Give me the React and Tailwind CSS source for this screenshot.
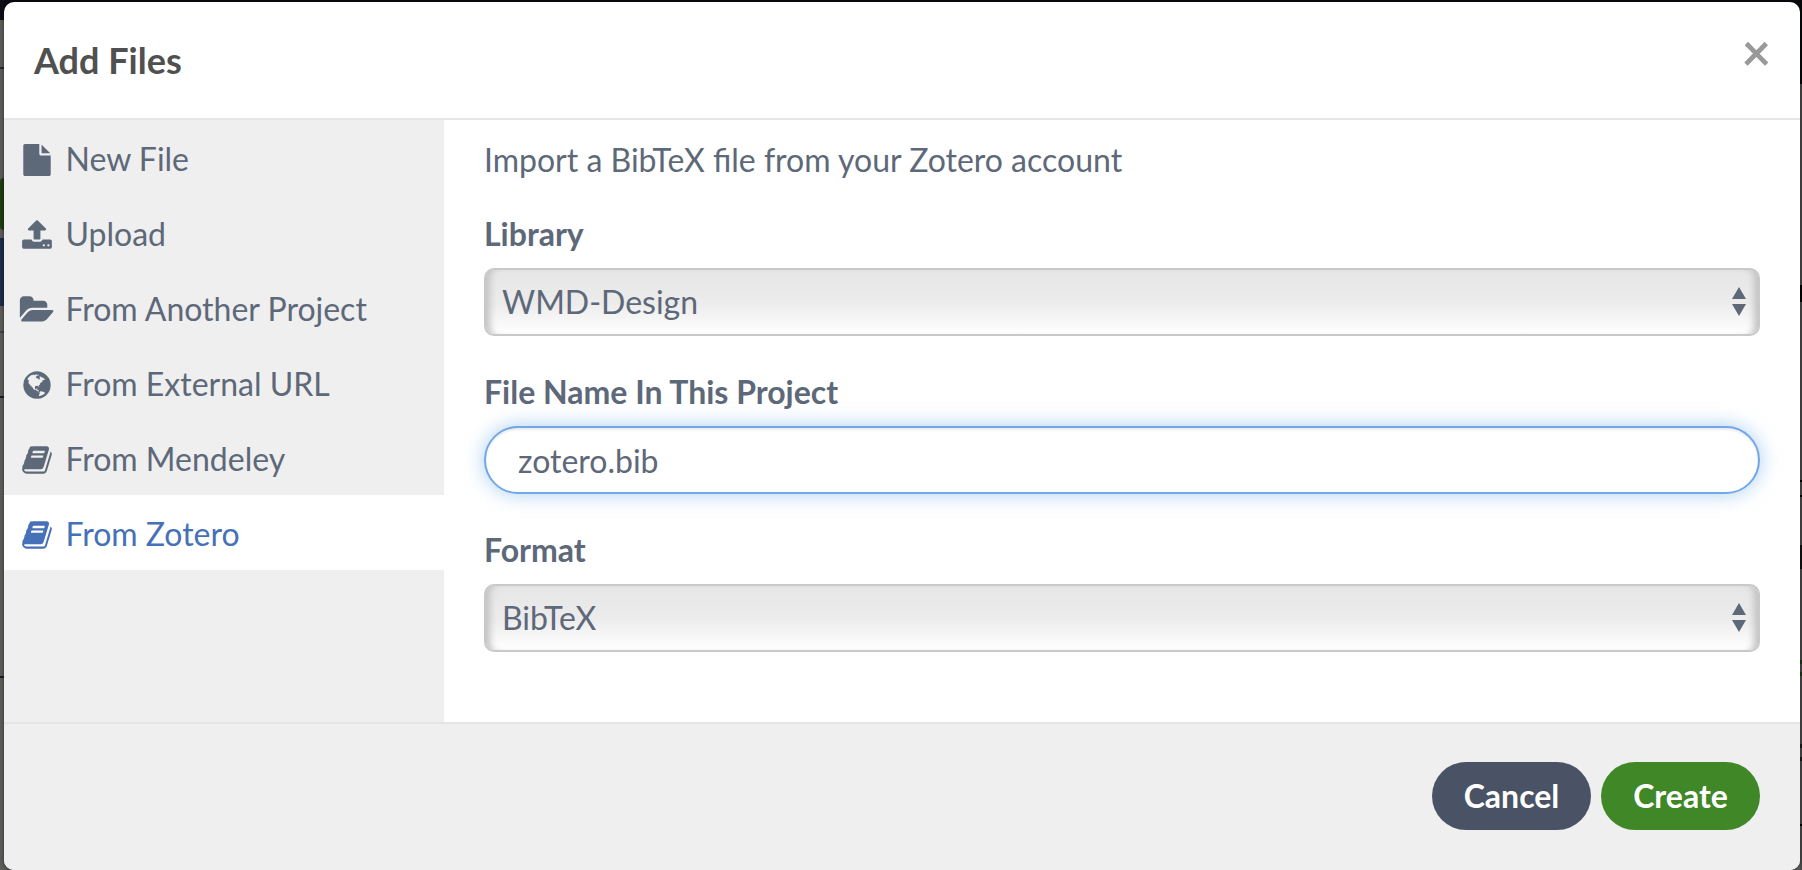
const paths = {
  file: "M1152 512v-472q22 14 36 28l408 408q14 14 28 36h-472zm-128 32q0 40 28 68t68 28h544v1056q0 40-28 68t-68 28h-1344q-40 0-68-28t-28-68v-1600q0-40 28-68t68-28h800v544z",
  upload: "M1344 1472q0-26-19-45t-45-19-45 19-19 45 19 45 45 19 45-19 19-45zm256 0q0-26-19-45t-45-19-45 19-19 45 19 45 45 19 45-19 19-45zm128-224v320q0 40-28 68t-68 28h-1472q-40 0-68-28t-28-68v-320q0-40 28-68t68-28h427q21 56 70.5 92t110.5 36h256q61 0 110.5-36t70.5-92h427q40 0 68 28t28 68zm-325-648q-17 40-59 40h-256v448q0 26-19 45t-45 19h-256q-26 0-45-19t-19-45v-448h-256q-42 0-59-40-17-39 14-69l448-448q18-19 45-19t45 19l448 448q31 30 14 69z",
  folder: "M1815 952q0 31-31 66l-336 396q-43 51-120.5 86.5t-143.5 35.5h-1088q-34 0-60.5-13t-26.5-43q0-31 31-66l336-396q43-51 120.5-86.5t143.5-35.5h1088q34 0 60.5 13t26.5 43zm-343-344v160h-832q-94 0-197 47.5t-164 119.5l-337 396-5 6q0-4-.5-12.5t-.5-12.5v-960q0-92 66-158t158-66h320q92 0 158 66t66 158v32h544q92 0 158 66t66 158z",
  globe: "M896 128q209 0 385.5 103t279.5 279.5 103 385.5-103 385.5-279.5 279.5-385.5 103-385.5-103-279.5-279.5-103-385.5 103-385.5 279.5-279.5 385.5-103zm274 521q-2 1-9.5 9.5t-13.5 9.5q2 0 4.5-5t5-11 3.5-7q6-7 22-15 14-6 52-12 34-8 51 11-2-2 9.5-13t14.5-12q3-2 15-4.5t15-7.5l2-22q-12 1-17.5-7t-6.5-21q0 2-6 8 0-7-4.5-8t-11.5 1-9 1q-10-3-15-7.5t-8-16.5-4-15q-2-5-9.5-11t-9.5-10q-1-2-2.5-5.5t-3-6.5-4-5.5-5.5-2.5-7 5-7.5 10-4.5 5q-3-2-6-1.5t-4.5 1-4.5 3-5 3.5q-3 2-8.5 3t-8.5 2q15-5-1-11-10-4-16-3 9-4 7.5-12t-8.5-14h5q-1-4-8.5-8.5t-17.5-8.5-13-6q-8-5-34-9.5t-33-.5q-5 6-4.5 10.5t4 14 3.5 12.5q1 6-5.5 13t-6.5 12q0 7 14 15.5t10 21.5q-3 8-16 16t-16 12q-5 8-1.5 18.5t10.5 16.5q2 2 1.5 4t-3.5 4.5-5.5 4-6.5 3.5l-3 2q-11 5-20.5-6t-13.5-26q-7-25-16-30-23-8-29 1-5-13-41-26-25-9-58-4 6-1 0-15-7-15-19-12 3-6 4-17.5t1-13.5q3-13 12-23 1-1 7-8.5t9.5-13.5.5-6q35 4 50-11 5-5 11.5-17t10.5-17q9-6 14-5.5t14.5 5.5 14.5 5q14 1 15.5-11t-7.5-20q12 1 3-17-4-7-8-9-12-4-27 5-8 4 2 8-1-1-9.5 10.5t-16.5 17.5-16-5q-1-1-5.5-13.5t-9.5-13.5q-8 0-16 15 3-8-11-15t-24-8q19-12-8-27-7-4-20.5-5t-19.5 4q-5 7-5.5 11.5t5 8 10.5 5.5 11.5 4 8.5 3q14 10 8 14-2 1-8.5 3.5t-11.5 4.5-6 4q-3 4 0 14t-2 14q-5-5-9-17.5t-7-16.5q7 9-25 6l-10-1q-4 0-16 2t-20.5 1-13.5-8q-4-8 0-20 1-4 4-2-4-3-11-9.5t-10-8.5q-46 15-94 41 6 1 12-1 5-2 13-6.5t10-5.5q34-14 42-7l5-5q14 16 20 25-7-4-30-1-20 6-22 12 7 12 5 18-4-3-11.5-10t-14.5-11-15-5q-16 0-22 1-146 80-235 222 7 7 12 8 4 1 5 9t2.5 11 11.5-3q9 8 3 19 1-1 44 27 19 17 21 21 3 11-10 18-1-2-9-9t-9-4q-3 5 .5 18.5t10.5 12.5q-7 0-9.5 16t-2.5 35.5-1 23.5l2 1q-3 12 5.5 34.5t21.5 19.5q-13 3 20 43 6 8 8 9 3 2 12 7.5t15 10 10 10.5q4 5 10 22.5t14 23.5q-2 6 9.5 20t10.5 23q-1 0-2.5 1t-2.5 1q3 7 15.5 14t15.5 13q1 3 2 10t3 11 8 2q2-20-24-62-15-25-17-29-3-5-5.5-15.5t-4.5-14.5q2 0 6 1.5t8.5 3.5 7.5 4 2 3q-3 7 2 17.5t12 18.5 17 19 12 13q6 6 14 19.5t0 13.5q9 0 20 10.5t17 19.5q5 8 8 26t5 24q2 7 8.5 13.5t12.5 9.5l16 8 13 7q5 2 18.5 10.5t21.5 11.5q10 4 16 4t14.5-2.5 13.5-3.5q15-2 29 15t21 21q36 19 55 11-2 1 .5 7.5t8 15.5 9 14.5 5.5 8.5q5 6 18 15t18 15q6-4 7-9-3 8 7 20t18 10q14-3 14-32-31 15-49-18 0-1-2.5-5.5t-4-8.5-2.5-8.5 0-7.5 5-3q9 0 10-3.5t-2-12.5-4-13q-1-8-11-20t-12-15q-5 9-16 8t-16-9q0 1-1.5 5.5t-1.5 6.5q-13 0-15-1 1-3 2.5-17.5t3.5-22.5q1-4 5.5-12t7.5-14.5 4-12.5-4.5-9.5-17.5-2.5q-19 1-26 20-1 3-3 10.5t-5 11.5-9 7q-7 3-24 2t-24-5q-13-8-22.5-29t-9.5-37q0-10 2.5-26.5t3-25-5.5-24.5q3-2 9-9.5t10-10.5q2-1 4.5-1.5t4.5 0 4-1.5 3-6q-1-1-4-3-3-3-4-3 7 3 28.5-1.5t27.5 1.5q15 11 22-2 0-1-2.5-9.5t-.5-13.5q5 27 29 9 3 3 15.5 5t17.5 5q3 2 7 5.5t5.5 4.5 5-.5 8.5-6.5q10 14 12 24 11 40 19 44 7 3 11 2t4.5-9.5 0-14-1.5-12.5l-1-8v-18l-1-8q-15-3-18.5-12t1.5-18.5 15-18.5q1-1 8-3.5t15.5-6.5 12.5-8q21-19 15-35 7 0 11-9-1 0-5-3t-7.5-5-4.5-2q9-5 2-16 5-3 7.5-11t7.5-10q9 12 21 2 7-8 1-16 5-7 20.5-10.5t18.5-9.5q7 2 8-2t1-12 3-12q4-5 15-9t13-5l17-11q3-4 0-4 18 2 31-11 10-11-6-20 3-6-3-9.5t-15-5.5q3-1 11.5-.5t10.5-1.5q15-10-7-16-17-5-43 12zm-163 877q206-36 351-189-3-3-12.5-4.5t-12.5-3.5q-18-7-24-8 1-7-2.5-13t-8-9-12.5-8-11-7q-2-2-7-6t-7-5.5-7.5-4.5-8.5-2-10 1l-3 1q-3 1-5.5 2.5t-5.5 3-4 3 0 2.5q-21-17-36-22-5-1-11-5.5t-10.5-7-10-1.5-11.5 7q-5 5-6 15t-2 13q-7-5 0-17.5t2-18.5q-3-6-10.5-4.5t-12 4.5-11.5 8.5-9 6.5-8.5 5.5-8.5 7.5q-3 4-6 12t-5 11q-2-4-11.5-6.5t-9.5-5.5q2 10 4 35t5 38q7 31-12 48-27 25-29 40-4 22 12 26 0 7-8 20.5t-7 21.5q0 6 2 16z",
  book: "M1703 478q40 57 18 129l-275 906q-19 64-76.5 107.5t-122.5 43.5h-923q-77 0-148.5-53.5t-99.5-131.5q-24-67-2-127 0-4 3-27t4-37q1-8-3-21.5t-3-19.5q2-11 8-21t16.5-23.5 16.5-23.5q23-38 45-91.5t30-91.5q3-10 .5-30t-.5-28q3-11 17-28t17-23q21-36 42-92t25-90q1-9-2.5-32t.5-28q4-13 22-30.5t22-22.5q19-26 42.5-84.5t27.5-96.5q1-8-3-25.5t-2-26.5q2-8 9-18t18-23 17-21q8-12 16.5-30.5t15-35 16-36 19.5-32 26.5-23.5 36-11.5 47.5 5.5l-1 3q38-9 51-9h761q74 0 114 56t18 130l-274 906q-36 119-71.5 153.5t-128.5 34.5h-869q-27 0-38 15-11 16-1 43 24 70 144 70h923q29 0 56-15.5t35-41.5l300-987q7-22 5-57 38 15 59 43zm-1064 2q-4 13 2 22.5t20 9.5h608q13 0 25.5-9.5t16.5-22.5l21-64q4-13-2-22.5t-20-9.5h-608q-13 0-25.5 9.5t-16.5 22.5zm-83 256q-4 13 2 22.5t20 9.5h608q13 0 25.5-9.5t16.5-22.5l21-64q4-13-2-22.5t-20-9.5h-608q-13 0-25.5 9.5t-16.5 22.5z",
};

const sources = [
  { icon: "file", label: "New File" },
  { icon: "upload", label: "Upload" },
  { icon: "folder", label: "From Another Project" },
  { icon: "globe", label: "From External URL" },
  { icon: "book", label: "From Mendeley" },
  { icon: "book", label: "From Zotero", active: true },
];

function SourceItem({ icon, label, active }) {
  return (
    <li>
      <button
        className={`flex h-[75px] w-full items-center gap-[8.5px] pl-3 pb-px text-left ${
          active ? "bg-white text-[#4670b8]" : "text-[#5d6879]"
        }`}
      >
        <span className="flex w-[41px] justify-center pt-[5px]">
          <svg viewBox="0 0 1792 1792" className="size-8 overflow-visible" fill="currentColor">
            <path d={paths[icon]} />
          </svg>
        </span>
        <span className="pt-[4px]">{label}</span>
      </button>
    </li>
  );
}

function SelectField({ label, value }) {
  return (
    <div className="flex flex-col">
      <label className="h-[50px] font-bold leading-[50px]">{label}</label>
      <div
        role="combobox"
        className="mt-[9px] flex h-[68px] items-center justify-between rounded-[10px] border-2 border-[#c9c9c9] bg-[linear-gradient(#e6e6e6,#ececec_52%,#ffffff)] pr-3 pl-4 shadow-[inset_9px_0_7px_-5px_#c2c2c2,inset_-9px_0_7px_-5px_#c2c2c2]"
      >
        <span className="pb-px">{value}</span>
        <svg viewBox="0 0 14 29" className="mb-px h-[29px] w-[14px] fill-[#5d6879]">
          <path d="M7 0 14 12H0zM7 29 0 17h14z" />
        </svg>
      </div>
    </div>
  );
}

export default function App() {
  return (
    <div className="flex h-[870px] w-[1802px] overflow-hidden bg-[linear-gradient(#0b0b10_50%,#5a5a58_50%)] font-['Lato',sans-serif] text-[32px] leading-[50px] text-[#5d6879]">
      <div className="flex w-1 shrink-0 flex-col bg-[#5e5d5a]">
        <div className="h-5 bg-[#0e0f16]" />
        <div className="mt-[47px] h-[2px] bg-[#2a2a2a]" />
        <div className="mt-[109px] h-[52px] rounded-l-full bg-[#1f3d0e]" />
        <div className="mt-2 h-[68px] bg-[#1f2d4b]" />
        <div className="mt-[25px] h-[2px] bg-[#454443]" />
        <div className="mt-[63px] h-[2px] bg-[#1c1c1c]" />
        <div className="mt-[278px] h-[2px] bg-[#1c1c1c]" />
      </div>
      <section className="z-10 mt-[2px] flex w-[1796px] flex-col overflow-hidden rounded-[10px] bg-white shadow-[0_0_4px_rgba(0,0,0,0.5)]">
        <header className="flex h-[118px] shrink-0 items-start justify-between border-b-2 border-[#e5e5e5] pr-[29px] pl-[30px]">
          <h1 className="pt-[33px] text-[36px] font-bold leading-[50px] text-[#505050]">Add Files</h1>
          <button aria-label="Close" className="pt-[25px] text-[51px] font-bold leading-[50px] text-[#999999]">
            ×
          </button>
        </header>
        <div className="flex h-[602px] shrink-0">
          <ul className="w-[440px] shrink-0 bg-[#efefef]">
            {sources.map((s) => (
              <SourceItem key={s.label} {...s} />
            ))}
          </ul>
          <main className="flex flex-1 flex-col px-10 pt-[15px]">
            <p>Import a BibTeX file from your Zotero account</p>
            <div className="mt-[24px] flex flex-col gap-[31px]">
              <SelectField label="Library" value="WMD-Design" />
              <div className="flex flex-col">
                <label className="h-[50px] font-bold leading-[50px]">File Name In This Project</label>
                <input
                  defaultValue="zotero.bib"
                  className="mt-[9px] h-[68px] rounded-full border-2 border-[#72a7e8] bg-white px-8 pt-px shadow-[inset_0_2px_2px_rgba(0,0,0,0.075),0_0_20px_rgba(114,175,232,0.6)] outline-none"
                />
              </div>
              <SelectField label="Format" value="BibTeX" />
            </div>
          </main>
        </div>
        <footer className="flex flex-1 items-start justify-end gap-[10px] border-t-2 border-[#e5e5e5] bg-[#efefef] pt-[38px] pr-10 font-bold text-white">
          <button className="h-[68px] w-[159px] rounded-full bg-[#495365]">Cancel</button>
          <button className="h-[68px] w-[159px] rounded-full bg-[#3f8727]">Create</button>
        </footer>
      </section>
      <div className="flex w-[2px] shrink-0 flex-col bg-[#4a4a4a]">
        <div className="h-[84px] bg-[#05060c]" />
        <div className="mt-[201px] h-[17px] bg-[#000000]" />
        <div className="mt-[178px] h-[17px] border-y-2 border-black" />
        <div className="mt-[48px] h-[24px] bg-[#111111]" />
        <div className="mt-[91px] h-[16px] border-y-4 border-[#173d10]" />
        <div className="mt-[68px] h-[17px] border-y-4 border-[#1c1c1c]" />
        <div className="mt-[63px] h-[2px] bg-black" />
      </div>
    </div>
  );
}
